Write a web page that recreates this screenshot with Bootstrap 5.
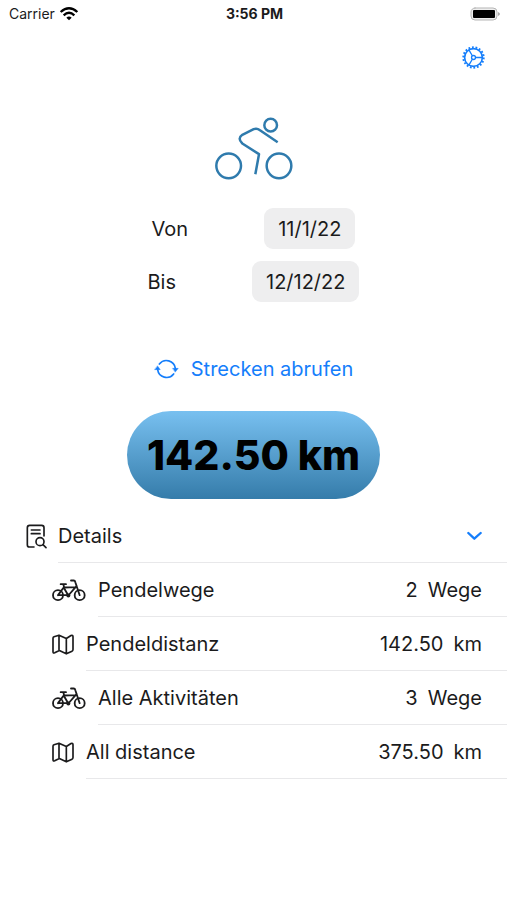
<!DOCTYPE html>
<html lang="de">
<head>
<meta charset="utf-8">
<meta name="viewport" content="width=device-width, initial-scale=1">
<title>Strecken</title>
<link href="https://cdn.jsdelivr.net/npm/bootstrap@5.3.0/dist/css/bootstrap.min.css" rel="stylesheet">
<style>
  body { font-family: Inter, "Liberation Sans", sans-serif; font-size: 20px; line-height: 28px; color: #1b1b1c; background: #fff; }
  svg { display: block; flex: none; fill: none; stroke: currentColor; stroke-linecap: round; stroke-linejoin: round; }
  .status-row { height: 28px; padding: 0 7px 0 9px; font-size: 14px; line-height: 20px; }
  .ios-blue, .ios-blue:hover { color: #157efb; }
  .plain-btn { font-size: 20px; line-height: 28px; }
  .tool-row { padding: 18px 22px 0; }
  .rider { color: #2f7bad; margin-top: 48px; }
  .dates { margin-top: 28px; gap: 12px; }
  .date-line { gap: 76px; }
  .date-btn { background: #eeeeef; border-radius: 9px; padding: 6px 14px; height: 41px; }
  .fetch { margin-top: 53px; gap: 12px; }
  .total { margin-top: 28px; height: 88px; padding: 0 20px; font-size: 41px; font-weight: 800; color: #000; background: linear-gradient(#78c0f0, #357caa); }
  .details { margin-top: 10px; }
  .entry { gap: 12px; padding-left: 52px; }
  .entry-head { gap: 10px; padding-left: 26px; }
  .entry-body { height: 54px; padding-right: 25px; border-bottom: 1px solid #e8e8ea; }
  .amount { gap: 10px; }
</style>
<script defer src="https://cdn.jsdelivr.net/npm/bootstrap@5.3.0/dist/js/bootstrap.bundle.min.js"></script>
</head>
<body>
<svg width="0" height="0" class="position-absolute" aria-hidden="true">
  <symbol id="bicycle" viewBox="20 25 102 68">
    <g stroke-width="5.5">
      <circle cx="38" cy="73" r="15"/><circle cx="103" cy="73" r="15"/>
      <path d="M38 73 55 50 92 49M55 50 69 74 94 45M38 73H69M46 40H62M54 40 58 56M77 29H85Q89 29 90 34L103 73"/>
    </g>
    <circle cx="69" cy="74" r="6" fill="currentColor" stroke="none"/>
  </symbol>
  <symbol id="map" viewBox="0 0 66 62">
    <path stroke-width="5" d="M3 12Q3 9 6 8L21 3 43 13 57 4Q63 2 63 8V46Q63 50 60 51L43 59 22 49 8 56Q3 58 3 53ZM21 4V49M43 13V58"/>
  </symbol>
</svg>

<header>
  <div class="status-row row g-0 align-items-center">
    <div class="col d-flex align-items-center gap-1">
      <span>Carrier</span>
      <svg width="20" height="16" viewBox="0 0 60 48" stroke="#000" stroke-width="7" style="color:#000" aria-hidden="true">
        <path stroke-linecap="butt" d="M5 18Q30-5 55 18M14 28Q30 13 46 28"/><path d="M22 35Q30 28 38 35L30 43Z" fill="#000" stroke="none"/>
      </svg>
    </div>
    <div class="col-auto fw-bold">3:56 PM</div>
    <div class="col d-flex justify-content-end">
      <svg width="30" height="14" viewBox="0 0 30 14" aria-hidden="true">
        <rect x="1" y="1" width="26" height="12" rx="4" fill="#eee" stroke="#b5b5b5"/>
        <rect x="3" y="3" width="22" height="8" rx="1" fill="#000" stroke="none"/>
        <path d="M28 5Q30 6 30 7T28 9Z" fill="#aaa" stroke="none"/>
      </svg>
    </div>
  </div>
  <div class="tool-row d-flex justify-content-end">
    <button type="button" class="btn border-0 p-0 ios-blue" aria-label="Einstellungen">
      <svg width="23" height="23" viewBox="-35 -35 70 70" stroke-width="5">
        <circle r="27"/><circle r="31" stroke-dasharray="5.4 5.4" stroke-linecap="butt" stroke-width="6"/>
        <circle r="6" stroke-width="4"/><path stroke-width="4" d="M7 0H26M-4-6-14-23M-4 6-14 23"/>
      </svg>
    </button>
  </div>
</header>

<main>
  <div class="d-flex flex-column align-items-center">
    <svg class="rider" width="78" height="63" viewBox="30 36 234 188" stroke-width="7.5" role="img" aria-label="Radfahrer">
      <circle cx="71" cy="182" r="37"/><circle cx="222" cy="182" r="37"/><circle cx="197" cy="60" r="19"/>
      <path stroke-linecap="butt" d="M218 111 165 75Q156 68 146 72L112 89Q96 100 112 115L162 147 151 207"/>
    </svg>

    <div class="dates d-flex flex-column align-items-center">
      <div class="date-line d-flex align-items-center">
        <label for="von">Von</label>
        <button type="button" id="von" class="date-btn border-0 text-reset">11/1/22</button>
      </div>
      <div class="date-line d-flex align-items-center">
        <label for="bis">Bis</label>
        <button type="button" id="bis" class="date-btn border-0 text-reset">12/12/22</button>
      </div>
    </div>

    <button type="button" class="fetch plain-btn btn border-0 p-0 d-flex align-items-center ios-blue">
      <svg width="25" height="22" viewBox="0 0 75 66" stroke-width="5" aria-hidden="true">
        <path d="M16 18A27 27 0 0 1 64 31M59 48A27 27 0 0 1 11 35"/>
        <path d="M56 31H73L64 42ZM2 35H19L11 24Z" fill="currentColor" stroke-width="1"/>
      </svg>
      <span>Strecken abrufen</span>
    </button>

    <output class="total rounded-pill d-flex align-items-center">142.50 km</output>
  </div>

  <section class="details">
    <div class="entry-head d-flex align-items-center">
      <svg width="22" height="25" viewBox="0 0 66 75" stroke-width="5" aria-hidden="true">
        <path d="M24 69H11Q4 69 4 62V11Q4 4 11 4H47Q54 4 54 11V36M16 18H42M16 29H42"/>
        <circle cx="42" cy="53" r="12"/><path d="M51 62 60 71"/>
      </svg>
      <button type="button" class="entry-body plain-btn btn text-reset rounded-0 border-top-0 border-start-0 border-end-0 py-0 ps-0 flex-fill d-flex align-items-center justify-content-between" data-bs-toggle="collapse" data-bs-target="#entries" aria-expanded="true" aria-controls="entries">
        <span>Details</span>
        <svg class="ios-blue" width="15" height="10" viewBox="0 0 45 30" stroke-width="7" aria-hidden="true"><path d="M4 6 22 23 41 6"/></svg>
      </button>
    </div>
    <ul id="entries" class="collapse show list-unstyled mb-0">
      <li class="entry d-flex align-items-center">
        <svg width="34" height="23" aria-hidden="true"><use href="#bicycle"/></svg>
        <div class="entry-body flex-fill d-flex align-items-center justify-content-between"><span>Pendelwege</span><span class="amount d-flex"><span>2</span><span>Wege</span></span></div>
      </li>
      <li class="entry d-flex align-items-center">
        <svg width="22" height="21" aria-hidden="true"><use href="#map"/></svg>
        <div class="entry-body flex-fill d-flex align-items-center justify-content-between"><span>Pendeldistanz</span><span class="amount d-flex"><span>142.50</span><span>km</span></span></div>
      </li>
      <li class="entry d-flex align-items-center">
        <svg width="34" height="23" aria-hidden="true"><use href="#bicycle"/></svg>
        <div class="entry-body flex-fill d-flex align-items-center justify-content-between"><span>Alle Aktivitäten</span><span class="amount d-flex"><span>3</span><span>Wege</span></span></div>
      </li>
      <li class="entry d-flex align-items-center">
        <svg width="22" height="21" aria-hidden="true"><use href="#map"/></svg>
        <div class="entry-body flex-fill d-flex align-items-center justify-content-between"><span>All distance</span><span class="amount d-flex"><span>375.50</span><span>km</span></span></div>
      </li>
    </ul>
  </section>
</main>
</body>
</html>
